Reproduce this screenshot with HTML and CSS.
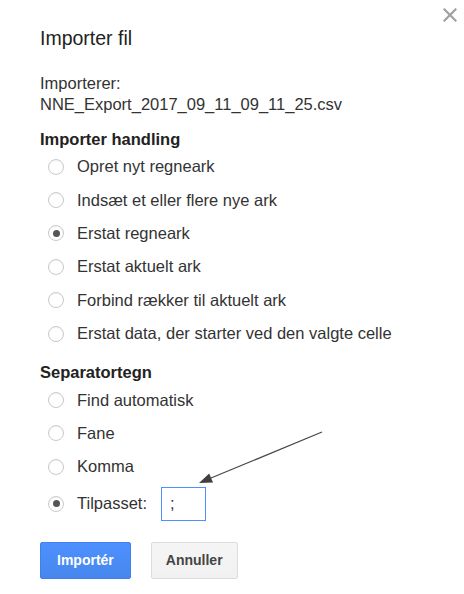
FILE: index.html
```html
<!DOCTYPE html>
<html lang="da">
<head>
  <meta charset="UTF-8">
  <meta name="viewport" content="width=device-width, initial-scale=1.0">
  <title>Importer fil</title>
  <link rel="stylesheet" href="styles.css">
</head>
<body>

<div class="dialog">
  <div class="dialog-top">
    <button class="close" type="button" aria-label="Luk">
      <svg width="14" height="14" viewBox="0 0 14 14">
        <path d="M1.5 1.5 L12.5 12.5 M12.5 1.5 L1.5 12.5" stroke="#a0a0a0" stroke-width="2.2" stroke-linecap="square"/>
      </svg>
    </button>
  </div>

  <div class="dialog-body">
    <h1 class="title">Importer fil</h1>

    <p class="source">Importerer:<br>NNE_Export_2017_09_11_09_11_25.csv</p>

    <h2 class="section-title">Importer handling</h2>
    <div class="radio-list">
      <label class="radio-row"><span class="radio"></span>Opret nyt regneark</label>
      <label class="radio-row"><span class="radio"></span>Indsæt et eller flere nye ark</label>
      <label class="radio-row"><span class="radio checked"></span>Erstat regneark</label>
      <label class="radio-row"><span class="radio"></span>Erstat aktuelt ark</label>
      <label class="radio-row"><span class="radio"></span>Forbind rækker til aktuelt ark</label>
      <label class="radio-row"><span class="radio"></span>Erstat data, der starter ved den valgte celle</label>
    </div>

    <h2 class="section-title second">Separatortegn</h2>
    <div class="radio-list">
      <label class="radio-row"><span class="radio"></span>Find automatisk</label>
      <label class="radio-row"><span class="radio"></span>Fane</label>
      <label class="radio-row"><span class="radio"></span>Komma</label>
      <label class="radio-row custom-row"><span class="radio checked"></span>Tilpasset:
        <input class="sep-input" type="text" value=";">
      </label>
    </div>

    <div class="actions">
      <button class="btn btn-primary" type="button">Importér</button>
      <button class="btn btn-secondary" type="button">Annuller</button>
    </div>
  </div>

  <!-- annotation arrow drawn over the dialog -->
  <svg class="annotation" width="464" height="594" viewBox="0 0 464 594">
    <line x1="322" y1="432" x2="211" y2="478" stroke="#4a4a4a" stroke-width="1.3"/>
    <polygon points="199,483 213,482.4 209.2,473.6" fill="#3f3f3f"/>
  </svg>
</div>

</body>
</html>
```

FILE: styles.css
```css
body {
  margin: 0;
  background-color: #fff;
  font-family: "Liberation Sans", Arial, sans-serif;
  color: #333;
}
.dialog {
  position: relative;
  width: 464px;
  height: 594px;
}
.dialog-top {
  display: flex;
  justify-content: flex-end;
  padding: 8px 7px 0 0;
}
.close {
  display: flex;
  padding: 0;
  border: none;
  background: none;
  cursor: pointer;
}
.dialog-body {
  padding: 4px 40px 0;
}
.title {
  margin: 0;
  font-size: 19.5px;
  line-height: 24px;
  font-weight: normal;
  color: #222;
}
.source {
  margin: 23px 0 0;
  font-size: 16.5px;
  line-height: 21px;
}
.section-title {
  margin: 14px 0 0;
  font-size: 16.5px;
  line-height: 21px;
  font-weight: bold;
  color: #222;
}
.section-title.second {
  margin-top: 12px;
}
.radio-list {
  display: flex;
  flex-direction: column;
  padding-left: 8px;
}
.radio-row {
  display: flex;
  align-items: center;
  gap: 13px;
  height: 33.4px;
  font-size: 16.5px;
  line-height: 21px;
}
.custom-row {
  height: 40px;
}
.radio {
  position: relative;
  width: 16px;
  height: 16px;
  box-sizing: border-box;
  border: 1px solid #c9c9c9;
  border-radius: 50%;
  background-color: #fff;
  box-shadow: inset 0 1px 1px rgba(0, 0, 0, 0.06);
  flex-shrink: 0;
}
.radio.checked::after {
  content: "";
  position: absolute;
  left: 3.5px;
  top: 3.5px;
  width: 7px;
  height: 7px;
  border-radius: 50%;
  background-color: #555;
}
.sep-input {
  width: 45px;
  height: 34px;
  box-sizing: border-box;
  margin-left: 1px;
  padding: 0 0 0 8px;
  border: 1px solid #4d90fe;
  font-family: inherit;
  font-size: 16.5px;
  color: #333;
  outline: none;
}
.actions {
  display: flex;
  gap: 20px;
  margin-top: 18px;
}
.btn {
  height: 37px;
  border-radius: 2px;
  border: 1px solid;
  font-family: inherit;
  font-size: 14px;
  font-weight: bold;
  cursor: pointer;
}
.btn-primary {
  padding: 0 16px;
  border-color: #3e80f0;
  background-image: linear-gradient(#4d90fe, #4787ed);
  color: #fff;
}
.btn-secondary {
  padding: 0 14px;
  border-color: #dcdcdc;
  background-image: linear-gradient(#f5f5f5, #f1f1f1);
  color: #444;
}
.annotation {
  position: absolute;
  left: 0;
  top: 0;
  pointer-events: none;
}
```
